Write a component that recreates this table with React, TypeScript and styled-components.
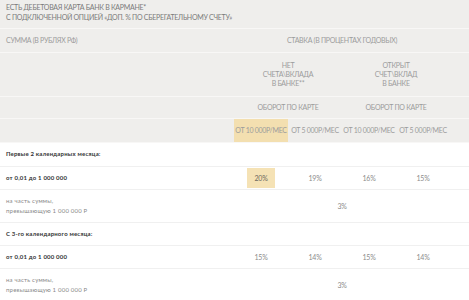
import React from 'react';
import styled, { createGlobalStyle } from 'styled-components';

const GlobalStyle = createGlobalStyle`
  html, body {
    margin: 0;
    padding: 0;
    background: #ffffff;
  }
  body {
    font-family: 'Lato', 'Liberation Sans', sans-serif;
  }
`;

const Page = styled.div`
  width: 469px;
  overflow: hidden;
`;

const Caption = styled.div`
  background: #efeeec;
  color: #7b7b7b;
  font-size: 7px;
  letter-spacing: -0.28px;
  line-height: 10px;
  text-transform: uppercase;
  padding: 2px 0 0 6px;
  height: 26px;
  border-bottom: 1px solid #f8f7f6;
  white-space: nowrap;
`;

const Table = styled.table`
  width: 469px;
  table-layout: fixed;
  border-collapse: collapse;
  border-spacing: 0;
`;

const Head = styled.thead`
  background: #efeeec;
`;

const HeadRow = styled.tr<{ h: number }>`
  height: ${({ h }) => h}px;
  border-bottom: 1px solid #f8f7f6;
`;

const HeadCell = styled.th<{ left?: boolean; active?: boolean }>`
  padding: 0;
  padding-left: ${({ left }) => (left ? '6px' : '0')};
  text-align: ${({ left }) => (left ? 'left' : 'center')};
  font-weight: 400;
  font-size: 7px;
  letter-spacing: -0.3px;
  line-height: 9px;
  color: #9c9c9c;
  text-transform: uppercase;
  white-space: nowrap;
  background: ${({ active }) => (active ? '#f3dfb0' : 'transparent')};
`;

const BodyRow = styled.tr<{ h: number }>`
  height: ${({ h }) => h}px;
  border-bottom: 1px solid #f0f0f0;
`;

const Label = styled.td<{ strong?: boolean }>`
  padding-left: 6px;
  font-size: 6px;
  letter-spacing: 0.2px;
  line-height: 10px;
  font-weight: ${({ strong }) => (strong ? 700 : 400)};
  color: ${({ strong }) => (strong ? '#333333' : '#8a8a8a')};
  white-space: nowrap;
`;

const Value = styled.td`
  text-align: center;
  font-size: 7px;
  letter-spacing: -0.2px;
  color: #8c8c8c;
  padding: 0;
`;

const Badge = styled.span<{ active?: boolean }>`
  display: inline-block;
  width: 28px;
  line-height: 20px;
  background: ${({ active }) => (active ? '#f5e2b5' : 'transparent')};
  color: ${({ active }) => (active ? '#6e6a60' : '#8c8c8c')};
`;

type Section = {
  title: string;
  rates: string[];
  highlight: boolean;
};

const sections: Section[] = [
  { title: 'Первые 2 календарных месяца:', rates: ['20%', '19%', '16%', '15%'], highlight: true },
  { title: 'С 3-го календарного месяца:', rates: ['15%', '14%', '15%', '14%'], highlight: false },
];

export default function App() {
  return (
    <Page>
      <GlobalStyle />
      <Caption>
        Есть дебетовая карта Банк в кармане*
        <br />
        С подключенной опцией «Доп. % по сберегательному счету»
      </Caption>
      <Table>
        <colgroup>
          <col style={{ width: 234 }} />
          <col style={{ width: 54 }} />
          <col style={{ width: 54 }} />
          <col style={{ width: 54 }} />
          <col style={{ width: 54 }} />
          <col />
        </colgroup>
        <Head>
          <HeadRow h={23}>
            <HeadCell left>Сумма (в рублях РФ)</HeadCell>
            <HeadCell colSpan={4}>Ставка (в процентах годовых)</HeadCell>
            <HeadCell />
          </HeadRow>
          <HeadRow h={44}>
            <HeadCell left />
            <HeadCell colSpan={2}>
              Нет
              <br />
              счета\вклада
              <br />
              в банке**
            </HeadCell>
            <HeadCell colSpan={2}>
              Открыт
              <br />
              счет\вклад
              <br />
              в банке
            </HeadCell>
            <HeadCell />
          </HeadRow>
          <HeadRow h={22}>
            <HeadCell left />
            <HeadCell colSpan={2}>Оборот по карте</HeadCell>
            <HeadCell colSpan={2}>Оборот по карте</HeadCell>
            <HeadCell />
          </HeadRow>
          <HeadRow h={24}>
            <HeadCell left />
            <HeadCell active>от 10 000р/мес</HeadCell>
            <HeadCell>от 5 000р/мес</HeadCell>
            <HeadCell>от 10 000р/мес</HeadCell>
            <HeadCell>от 5 000р/мес</HeadCell>
            <HeadCell />
          </HeadRow>
        </Head>
        <tbody>
          {sections.map((s) => (
            <React.Fragment key={s.title}>
              <BodyRow h={s.highlight ? 24 : 23}>
                <Label strong colSpan={6}>{s.title}</Label>
              </BodyRow>
              <BodyRow h={23}>
                <Label strong>от 0,01 до 1 000 000</Label>
                {s.rates.map((r, i) => (
                  <Value key={i}>
                    <Badge active={s.highlight && i === 0}>{r}</Badge>
                  </Value>
                ))}
                <Value />
              </BodyRow>
              <BodyRow h={33}>
                <Label>
                  на часть суммы,
                  <br />
                  превышающую 1 000 000 Р
                </Label>
                <Value colSpan={4}>3%</Value>
                <Value />
              </BodyRow>
            </React.Fragment>
          ))}
        </tbody>
      </Table>
    </Page>
  );
}
